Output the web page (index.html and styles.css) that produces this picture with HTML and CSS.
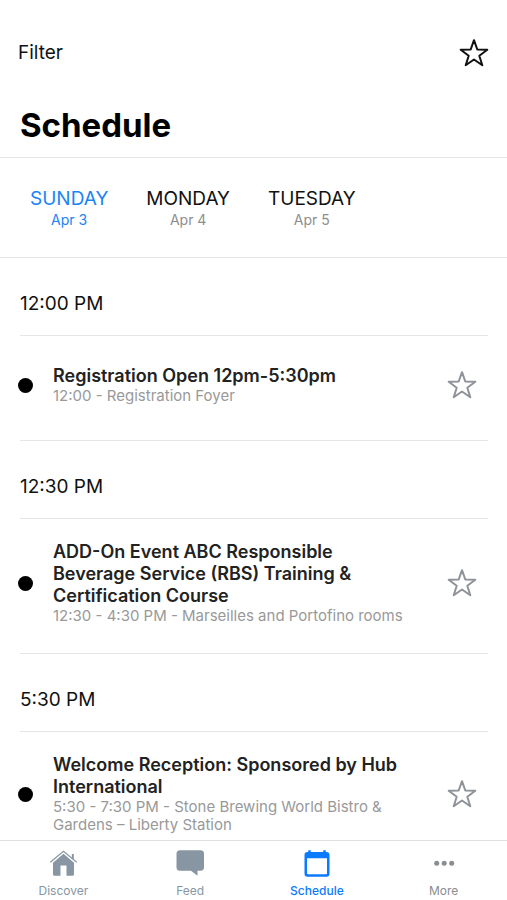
FILE: index.html
```html
<!DOCTYPE html>
<html lang="en">
<head>
    <meta charset="UTF-8">
    <meta name="viewport" content="width=device-width, initial-scale=1.0">
    <title>Schedule</title>
    <link rel="stylesheet" href="styles.css">
</head>
<body>

    <svg class="sprite" aria-hidden="true">
        <symbol id="star" viewBox="0 0 30 30">
            <path d="M15 2.200l3.300 9.300 10 .2-8 6 3 9.600L15 21.500l-8.300 5.800 3-9.600-8-6 10-.2z" fill="none" stroke="currentColor" stroke-width="2" stroke-linejoin="round"/>
        </symbol>
    </svg>

    <header class="header">
        <div class="toolbar">
            <button class="filter">Filter</button>
            <button class="star" aria-label="Show favorites"><svg class="star-icon"><use href="#star"/></svg></button>
        </div>
        <h1 class="title">Schedule</h1>
    </header>

    <nav class="days" aria-label="Days">
        <button class="day active">SUNDAY<span class="date">Apr 3</span></button>
        <button class="day">MONDAY<span class="date">Apr 4</span></button>
        <button class="day">TUESDAY<span class="date">Apr 5</span></button>
    </nav>

    <main class="schedule">
        <section class="slot">
            <h2 class="time">12:00 PM</h2>
            <article class="event">
                <span class="dot"></span>
                <div class="info">
                    <h3 class="name">Registration Open 12pm-5:30pm</h3>
                    <p class="place">12:00 - Registration Foyer</p>
                </div>
                <button class="star muted" aria-label="Add to favorites"><svg class="star-icon"><use href="#star"/></svg></button>
            </article>
        </section>

        <section class="slot">
            <h2 class="time">12:30 PM</h2>
            <article class="event">
                <span class="dot"></span>
                <div class="info">
                    <h3 class="name">ADD-On Event ABC Responsible Beverage Service (RBS) Training &amp; Certification Course</h3>
                    <p class="place">12:30 - 4:30 PM - Marseilles and Portofino rooms</p>
                </div>
                <button class="star muted" aria-label="Add to favorites"><svg class="star-icon"><use href="#star"/></svg></button>
            </article>
        </section>

        <section class="slot">
            <h2 class="time">5:30 PM</h2>
            <article class="event">
                <span class="dot"></span>
                <div class="info">
                    <h3 class="name">Welcome Reception: Sponsored by Hub International</h3>
                    <p class="place">5:30 - 7:30 PM - Stone Brewing World Bistro &amp; Gardens – Liberty Station</p>
                </div>
                <button class="star muted" aria-label="Add to favorites"><svg class="star-icon"><use href="#star"/></svg></button>
            </article>
        </section>
    </main>

    <nav class="tabs" aria-label="Main">
        <a class="tab" href="#discover">
            <svg class="tab-icon" viewBox="0 0 30 30">
                <path d="M5 13.800L15.500 4.800 26 13.800V25.200q0 1.500-1.500 1.500H18.500V16.500h-6v10.200H6.500Q5 26.700 5 25.200z" fill="currentColor"/>
                <path d="M2.300 13.300L15.500 2.300l13.200 11" fill="none" stroke="currentColor" stroke-width="1.200"/>
                <path d="M24.800 5v5" stroke="currentColor" stroke-width="2"/>
            </svg>
            Discover
        </a>
        <a class="tab" href="#feed">
            <svg class="tab-icon" viewBox="0 0 30 30">
                <path d="M5 1.300h20.500q3.500 0 3.500 3.500v13.500q0 3.500-3.500 3.500H22.500v5L16 21.800H5q-3.500 0-3.500-3.500V4.800Q1.500 1.300 5 1.300z" fill="currentColor"/>
            </svg>
            Feed
        </a>
        <a class="tab current" href="#schedule">
            <svg class="tab-icon" viewBox="0 0 30 30">
                <path d="M7.500 1.200v4M22.500 1.200v4" stroke="currentColor" stroke-width="2.500"/>
                <path d="M5.500 3h19q3 0 3 3v18.700q0 3-3 3h-19q-3 0-3-3V6q0-3 3-3zM5 9.300V24.300q0 1 1 1h18q1 0 1-1V9.300z" fill="currentColor" fill-rule="evenodd"/>
            </svg>
            Schedule
        </a>
        <a class="tab more" href="#more">
            <svg class="tab-icon" viewBox="0 0 30 30">
                <circle cx="7.700" cy="14.300" r="2.500" fill="currentColor"/>
                <circle cx="15.200" cy="14.300" r="2.500" fill="currentColor"/>
                <circle cx="22.700" cy="14.300" r="2.500" fill="currentColor"/>
            </svg>
            More
        </a>
    </nav>

</body>
</html>
```

FILE: styles.css
```css
* {
    box-sizing: border-box;
}
body {
    margin: 0;
    height: 100vh;
    display: flex;
    flex-direction: column;
    background: white;
    color: #111;
    font-family: Inter, "Liberation Sans", sans-serif;
}
button {
    padding: 0;
    border: none;
    background: none;
    color: inherit;
    font-family: inherit;
    cursor: pointer;
}
h1, h2, h3, p {
    margin: 0;
}
.sprite {
    position: absolute;
    width: 0;
    height: 0;
}
.header {
    padding: 37px 18px 12px;
    border-bottom: 1px solid #e6e6e6;
}
.toolbar {
    display: flex;
    justify-content: space-between;
    align-items: center;
    height: 32px;
}
.filter {
    font-size: 19px;
    line-height: 24px;
}
.star {
    display: flex;
    color: #111;
}
.star-icon {
    width: 30px;
    height: 30px;
}
.star.muted {
    color: #8e9399;
}
.title {
    margin-top: 36px;
    padding-left: 2px;
    color: black;
    font-size: 33px;
    line-height: 40px;
    font-weight: 700;
}
.days {
    display: flex;
    flex-shrink: 0;
    gap: 38px;
    padding: 29px 30px 28px;
    border-bottom: 1px solid #e6e6e6;
}
.day {
    font-size: 19px;
    line-height: 24px;
}
.date {
    display: block;
    color: #8e8e8e;
    font-size: 14px;
    line-height: 18px;
}
.day.active,
.day.active .date {
    color: #1a84f5;
}
.schedule {
    flex: 1;
    min-height: 0;
    overflow-y: auto;
    scrollbar-width: none;
    padding: 0 19px 0 20px;
}
.time {
    padding: 34px 0 19px;
    border-bottom: 1px solid #e6e6e6;
    font-size: 19px;
    line-height: 24px;
    font-weight: 400;
}
.event {
    display: flex;
    align-items: center;
    min-height: 105px;
    padding: 22px 11px 28px 0;
    border-bottom: 1px solid #e6e6e6;
}
.dot {
    flex-shrink: 0;
    width: 15px;
    height: 15px;
    margin: 0 20px 0 -2px;
    border-radius: 50%;
    background: black;
}
.info {
    flex: 1;
    padding-right: 30px;
}
.name {
    color: #222;
    font-size: 18px;
    line-height: 22px;
    font-weight: 600;
}
.place {
    color: #999;
    font-size: 15px;
    line-height: 18px;
}
.tabs {
    display: flex;
    flex-shrink: 0;
    height: 60px;
    border-top: 1px solid #e0e0e0;
    background: white;
}
.tab {
    flex: 1;
    display: flex;
    flex-direction: column;
    align-items: center;
    gap: 4px;
    padding-top: 8px;
    color: #8796a2;
    font-size: 12px;
    line-height: 16px;
    text-decoration: none;
}
.tab-icon {
    width: 30px;
    height: 30px;
}
.tab.current {
    color: #0a7aff;
    font-weight: 500;
}
.tab.more {
    color: #8a8d91;
}
```
